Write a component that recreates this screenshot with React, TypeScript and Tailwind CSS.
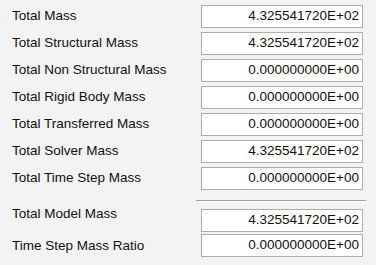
import React from 'react';

interface MassRow {
  label: string;
  value: string;
}

const mainRows: MassRow[] = [
  { label: 'Total Mass', value: '4.325541720E+02' },
  { label: 'Total Structural Mass', value: '4.325541720E+02' },
  { label: 'Total Non Structural Mass', value: '0.000000000E+00' },
  { label: 'Total Rigid Body Mass', value: '0.000000000E+00' },
  { label: 'Total Transferred Mass', value: '0.000000000E+00' },
  { label: 'Total Solver Mass', value: '4.325541720E+02' },
  { label: 'Total Time Step Mass', value: '0.000000000E+00' },
];

const ValueBox: React.FC<{ value: string }> = ({ value }) => (
  <div className="w-[162px] h-[23px] bg-white border border-[#adadad] flex items-center justify-end pr-[3px] text-[13.5px] text-[#111]">
    {value}
  </div>
);

const App: React.FC = () => {
  return (
    <div
      className="w-[376px] h-[265px] bg-[#f3f3f3] pt-[5px] pl-[12px] text-[13.5px] text-[#111]"
      style={{ fontFamily: '"Liberation Sans", Arial, sans-serif' }}
    >
      {/* main mass rows */}
      <div className="flex flex-col gap-[4px]">
        {mainRows.map((row) => (
          <div key={row.label} className="flex items-center h-[23px]">
            <div className="w-[189px]">{row.label}</div>
            <ValueBox value={row.value} />
          </div>
        ))}
      </div>

      {/* separator */}
      <div className="ml-[184px] mt-[10px] w-[170px] h-[2px] border-t border-[#a0a0a0] border-b border-b-white"></div>

      <div className="flex flex-col gap-[2px] mt-[7px]">
        <div className="flex items-start h-[23px]">
          <div className="w-[189px] -mt-[5px]">Total Model Mass</div>
          <ValueBox value="4.325541720E+02" />
        </div>
        <div className="flex items-center h-[23px]">
          <div className="w-[189px] pt-[2px]">Time Step Mass Ratio</div>
          <ValueBox value="0.000000000E+00" />
        </div>
      </div>
    </div>
  );
};

export default App;
